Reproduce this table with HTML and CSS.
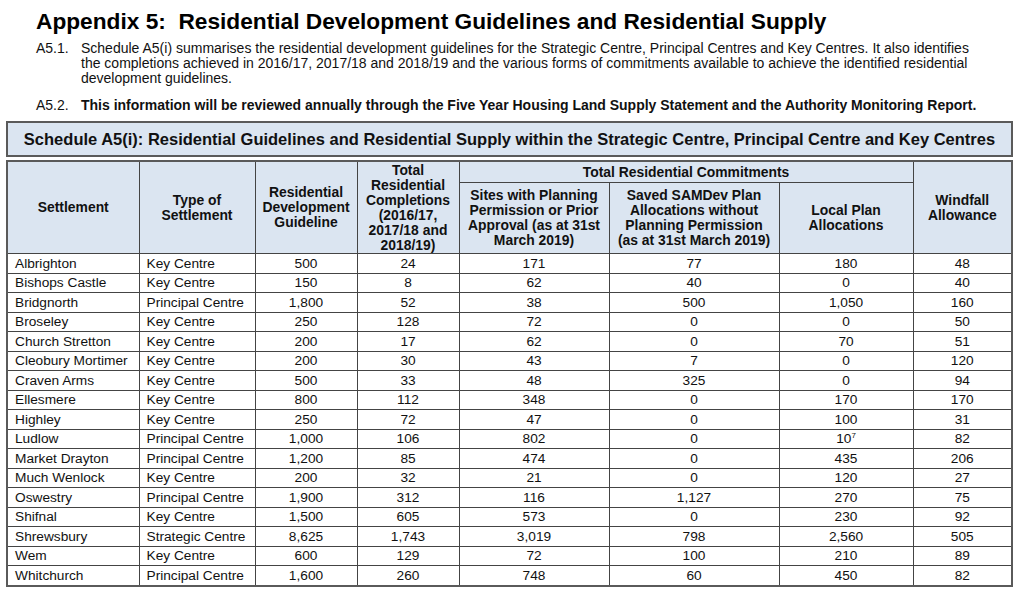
FILE: index.html
```html
<!DOCTYPE html>
<html lang="en">
<head>
<meta charset="utf-8">
<title>Appendix 5: Residential Development Guidelines and Residential Supply</title>
<link rel="stylesheet" href="styles.css">
</head>
<body>
<main class="page">
  <h1 class="title">Appendix 5:&nbsp; Residential Development Guidelines and Residential Supply</h1>
  <div class="para">
    <span class="num">A5.1.</span>
    <p class="text">Schedule A5(i) summarises the residential development guidelines for the Strategic Centre, Principal Centres and Key Centres. It also identifies the completions achieved in 2016/17, 2017/18 and 2018/19 and the various forms of commitments available to achieve the identified residential development guidelines.</p>
  </div>
  <div class="para para-bold">
    <span class="num">A5.2.</span>
    <p class="text">This information will be reviewed annually through the Five Year Housing Land Supply Statement and the Authority Monitoring Report.</p>
  </div>

  <div class="caption">Schedule A5(i): Residential Guidelines and Residential Supply within the Strategic Centre, Principal Centre and Key Centres</div>

  <table class="grid">
    <colgroup>
      <col class="c1"><col class="c2"><col class="c3"><col class="c4"><col class="c5"><col class="c6"><col class="c7"><col class="c8">
    </colgroup>
    <thead>
      <tr class="h1">
        <th rowspan="2">Settlement</th>
        <th rowspan="2">Type of<br>Settlement</th>
        <th rowspan="2">Residential<br>Development<br>Guideline</th>
        <th rowspan="2">Total<br>Residential<br>Completions<br>(2016/17,<br>2017/18 and<br>2018/19)</th>
        <th colspan="3">Total Residential Commitments</th>
        <th rowspan="2">Windfall<br>Allowance</th>
      </tr>
      <tr class="h2">
        <th>Sites with Planning<br>Permission or Prior<br>Approval (as at 31st<br>March 2019)</th>
        <th>Saved SAMDev Plan<br>Allocations without<br>Planning Permission<br>(as at 31st March 2019)</th>
        <th>Local Plan<br>Allocations</th>
      </tr>
    </thead>
    <tbody>
      <tr><td>Albrighton</td><td>Key Centre</td><td>500</td><td>24</td><td>171</td><td>77</td><td>180</td><td>48</td></tr>
      <tr><td>Bishops Castle</td><td>Key Centre</td><td>150</td><td>8</td><td>62</td><td>40</td><td>0</td><td>40</td></tr>
      <tr><td>Bridgnorth</td><td>Principal Centre</td><td>1,800</td><td>52</td><td>38</td><td>500</td><td>1,050</td><td>160</td></tr>
      <tr><td>Broseley</td><td>Key Centre</td><td>250</td><td>128</td><td>72</td><td>0</td><td>0</td><td>50</td></tr>
      <tr><td>Church Stretton</td><td>Key Centre</td><td>200</td><td>17</td><td>62</td><td>0</td><td>70</td><td>51</td></tr>
      <tr><td>Cleobury Mortimer</td><td>Key Centre</td><td>200</td><td>30</td><td>43</td><td>7</td><td>0</td><td>120</td></tr>
      <tr><td>Craven Arms</td><td>Key Centre</td><td>500</td><td>33</td><td>48</td><td>325</td><td>0</td><td>94</td></tr>
      <tr><td>Ellesmere</td><td>Key Centre</td><td>800</td><td>112</td><td>348</td><td>0</td><td>170</td><td>170</td></tr>
      <tr><td>Highley</td><td>Key Centre</td><td>250</td><td>72</td><td>47</td><td>0</td><td>100</td><td>31</td></tr>
      <tr><td>Ludlow</td><td>Principal Centre</td><td>1,000</td><td>106</td><td>802</td><td>0</td><td>10<sup>7</sup></td><td>82</td></tr>
      <tr><td>Market Drayton</td><td>Principal Centre</td><td>1,200</td><td>85</td><td>474</td><td>0</td><td>435</td><td>206</td></tr>
      <tr><td>Much Wenlock</td><td>Key Centre</td><td>200</td><td>32</td><td>21</td><td>0</td><td>120</td><td>27</td></tr>
      <tr><td>Oswestry</td><td>Principal Centre</td><td>1,900</td><td>312</td><td>116</td><td>1,127</td><td>270</td><td>75</td></tr>
      <tr><td>Shifnal</td><td>Key Centre</td><td>1,500</td><td>605</td><td>573</td><td>0</td><td>230</td><td>92</td></tr>
      <tr><td>Shrewsbury</td><td>Strategic Centre</td><td>8,625</td><td>1,743</td><td>3,019</td><td>798</td><td>2,560</td><td>505</td></tr>
      <tr><td>Wem</td><td>Key Centre</td><td>600</td><td>129</td><td>72</td><td>100</td><td>210</td><td>89</td></tr>
      <tr><td>Whitchurch</td><td>Principal Centre</td><td>1,600</td><td>260</td><td>748</td><td>60</td><td>450</td><td>82</td></tr>
    </tbody>
  </table>
</main>
</body>
</html>
```

FILE: styles.css
```css
html, body {
  margin: 0;
  padding: 0;
  background: #ffffff;
}

body {
  font-family: "Liberation Sans", Arial, sans-serif;
  color: #111;
}

.page {
  padding: 8px 0 0 6px;
  width: 1010px;
}

.title {
  margin: 0 0 7px 30px;
  font-size: 22.7px;
  line-height: 26px;
  font-weight: bold;
  color: #000;
}

.para {
  display: flex;
  margin: 0 0 12px 30px;
  font-size: 14px;
  line-height: 15px;
}

.para .num {
  flex: 0 0 45px;
}

.para .text {
  margin: 0;
  width: 902px;
}

.para-bold .text {
  font-weight: bold;
  white-space: nowrap;
}

.para-bold {
  margin-bottom: 8px;
}

.caption {
  width: 1007px;
  box-sizing: border-box;
  height: 36px;
  border: 2px solid #5a5a5a;
  background: #dbe5f1;
  text-align: center;
  font-weight: bold;
  font-size: 16.5px;
  line-height: 32px;
  color: #111;
  margin-bottom: 3px;
}

.grid {
  border-collapse: collapse;
  table-layout: fixed;
  width: 1006px;
  border: 2px solid #5a5a5a;
  font-size: 13.7px;
}

.c1 { width: 132px; }
.c2 { width: 116px; }
.c3 { width: 102px; }
.c4 { width: 102px; }
.c5 { width: 150px; }
.c6 { width: 170px; }
.c7 { width: 134px; }
.c8 { width: 99px; }

.grid th,
.grid td {
  border: 1px solid #444;
  padding: 0;
}

.grid th {
  background: #dbe5f1;
  font-weight: bold;
  font-size: 13.9px;
  line-height: 15px;
  text-align: center;
  vertical-align: middle;
}

.grid .h1 th {
  height: 20px;
}

.grid .h2 th {
  height: 70px;
}

.grid td {
  height: 18.5px;
  line-height: 15px;
  text-align: center;
  vertical-align: middle;
}

.grid td:nth-child(1),
.grid td:nth-child(2) {
  text-align: left;
  padding-left: 7px;
}

.grid sup {
  font-size: 8px;
  line-height: 0;
  vertical-align: 5px;
}
```
